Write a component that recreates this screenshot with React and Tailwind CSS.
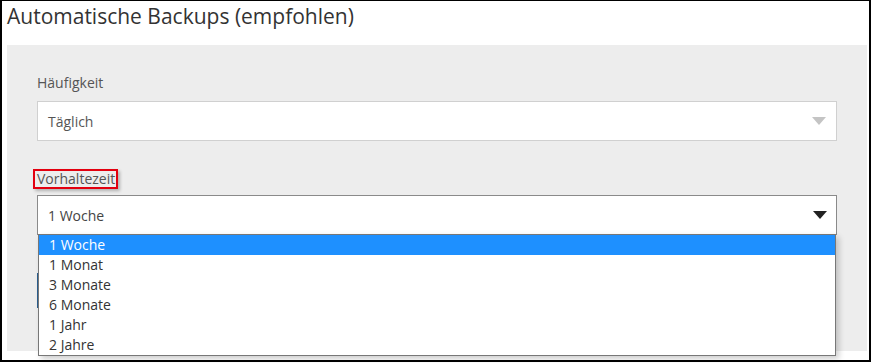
const options = ['1 Woche', '1 Monat', '3 Monate', '6 Monate', '1 Jahr', '2 Jahre'];

function Arrow({ color }) {
  return (
    <svg width="14" height="8" viewBox="0 0 14 8" className="shrink-0">
      <path d="M0 0 L14 0 L7 8 Z" fill={color} />
    </svg>
  );
}

export default function App() {
  return (
    <div className="w-[873px] h-[363px] bg-white" style={{ fontFamily: '"Open Sans", "Noto Sans", sans-serif' }}>
      <div className="w-[871px] h-[362px] border-l-2 border-r-2 border-b-2 border-t border-black flex flex-col pl-[5px] pr-[2px]">
        <h1 className="text-[21px] leading-[28px] text-[#333] mt-[1px] h-[43px]">Automatische Backups (empfohlen)</h1>

        <div className="bg-[#ededed] h-[306px] pt-[28px] px-[30px]">
          <label className="block text-[14px] leading-[20px] text-[#555]">Häufigkeit</label>
          <div className="mt-[8px] h-[40px] bg-white border border-[#d0d0d0] flex items-center justify-between pl-[10px] pr-[10px]">
            <span className="text-[14px] text-[#555]">Täglich</span>
            <Arrow color="#c4c4c4" />
          </div>

          <div className="mt-[25px] h-[20px]">
            <span className="relative inline-block text-[14px] leading-[20px] text-[#555]">
              Vorhaltezeit
              <span className="absolute -left-[4px] top-0 w-[85px] h-[20px] border-2 border-[#e3000f] shadow-[2px_2px_3px_rgba(0,0,0,0.25)]" />
            </span>
          </div>

          <div className="relative mt-[9px]">
            <div className="h-[40px] bg-white border border-[#8a8a8a] flex items-center justify-between pl-[10px] pr-[9px]">
              <span className="text-[14px] text-[#444]">1 Woche</span>
              <Arrow color="#222" />
            </div>

            {/* save button, hidden behind the open list */}
            <button aria-label="Speichern" className="block mt-[38px] h-[35px] w-[120px] bg-[#2a5f8f]" />

            <ul className="absolute left-[1px] right-[1px] top-[39px] bg-white border border-[#777] shadow-[3px_3px_6px_rgba(0,0,0,0.2)]">
              {options.map((o, i) => (
                <li
                  key={o}
                  className={
                    i === 0
                      ? 'h-[20px] leading-[20px] pl-[10px] text-[14px] bg-[#1e90ff] text-white'
                      : 'h-[20px] leading-[20px] pl-[10px] text-[14px] text-[#333]'
                  }
                >
                  {o}
                </li>
              ))}
            </ul>
          </div>
        </div>
      </div>
    </div>
  );
}
